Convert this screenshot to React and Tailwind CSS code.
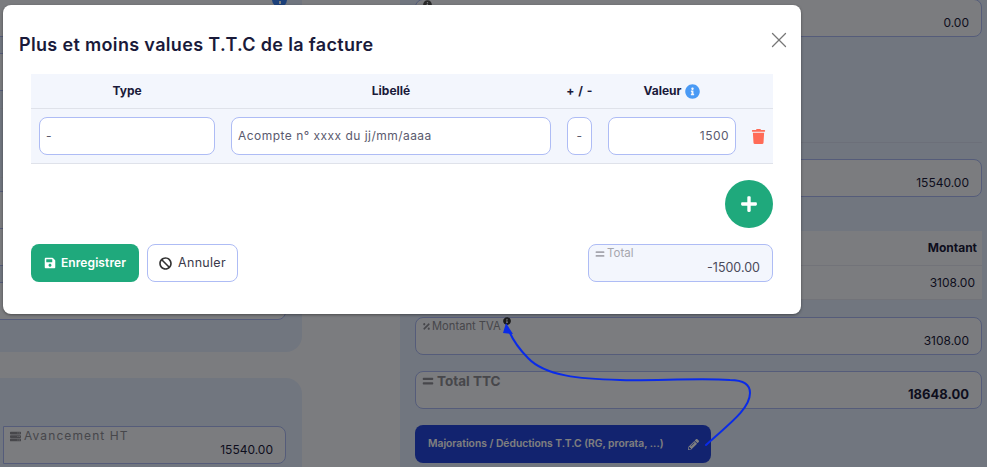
import React from "react";
import { FaTrash, FaSave, FaBan, FaInfoCircle, FaPlus, FaEquals, FaPercentage, FaServer, FaPencilAlt } from "react-icons/fa";
import { X } from "lucide-react";

function BgField({ className = "", label, icon, value, labelClass = "text-[11.5px]", valueClass = "-mt-[2px] text-[12px] text-[#1c1c3c]" }) {
  return (
    <div className={`h-[38px] shrink-0 rounded-lg border border-[#aab9f4] bg-[#f6f8ff] px-[6px] flex flex-col ${className}`}>
      <div className={`h-[17px] flex items-center gap-[3px] text-[#8e8e96] whitespace-nowrap ${labelClass}`}>
        {icon}
        {label}
      </div>
      <div className={`text-right pr-[6px] leading-[16px] ${valueClass}`}>{value}</div>
    </div>
  );
}

function Input({ className = "", children }) {
  return (
    <div className={`h-[38px] shrink-0 rounded-lg border border-[#aebcf5] bg-white flex items-center px-[6px] text-[12px] tracking-[0.47px] text-[#5a5a6e] ${className}`}>
      {children}
    </div>
  );
}

export default function App() {
  return (
    <div className="relative w-[987px] h-[467px] overflow-hidden bg-[#f6f8ff] font-['Inter',sans-serif] flex">
      {/* page behind the dialog */}
      <div className="w-[302px] shrink-0 flex flex-col">
        <div className="h-[352px] rounded-br-[16px] bg-[#e2ecfe] pr-[16px] flex flex-col relative">
          <BgField className="-ml-[10px] mt-[-1px]" />
          <BgField className="-ml-[10px] mt-[16px]" />
          <div className="-ml-[10px] mt-[17px] h-[70px] shrink-0 border-y border-[#e4e7f2]" />
          <BgField className="-ml-[10px] mt-[13px]" />
          <BgField className="-ml-[10px] mt-[-1px]" />
          <BgField className="-ml-[10px] mt-[16px]" />
          <div className="absolute left-[272px] -top-[8px] w-[15px] h-[15px] rounded-full bg-[#3b82f6]">
            <div className="absolute left-[6.5px] top-[9px] w-[2px] h-[3px] bg-white" />
          </div>
        </div>
        <div className="mt-[26px] flex-1 rounded-tr-[16px] bg-[#e2ecfe] pt-[48px] pl-[3px] pr-[16px]">
          <BgField
            label="Avancement HT"
            labelClass="text-[12px] tracking-[1.1px] pt-[1px]"
            icon={<FaServer className="text-[11px] text-[#8e8e96]" />}
            value="15540.00"
            className="rounded-l-none"
          />
        </div>
      </div>

      <div className="ml-[98px] flex-1 bg-[#e2ecfe] pl-[15px] pr-[5px] flex flex-col">
        <BgField
          className="mt-[-1px]"
          icon={<FaInfoCircle className="text-[9px] text-[#555] ml-[1px] -translate-y-[4px]" />}
          value="0.00"
        />
        <div className="mt-[105px] h-px shrink-0 bg-[#d9dff2]" />
        <BgField className="mt-[16px]" value="15540.00" />
        <div className="mt-[34px] h-[69px] shrink-0 bg-[#f6f8ff] flex flex-col text-right">
          <div className="h-[35px] pr-[5px] border-b border-[#e4e7f2] flex items-center justify-end text-[12px] font-bold text-[#1c1c3c]">Montant</div>
          <div className="h-[34px] pr-[7px] border-b border-[#e4e7f2] flex items-center justify-end text-[12px] text-[#1c1c3c]">3108.00</div>
        </div>
        <BgField
          className="mt-[17px]"
          label={
            <span className="-ml-[2px] flex items-center gap-[2px] text-[11.2px]">
              Montant TVA <FaInfoCircle className="text-[8px] text-[#333] -translate-y-[5px]" />
            </span>
          }
          icon={<FaPercentage className="text-[9px] text-[#8e8e96]" />}
          value="3108.00"
        />
        <BgField
          className="mt-[16px]"
          label={<span className="pt-[1px] text-[13.5px] font-bold text-[#8e8e96]">Total TTC</span>}
          icon={<FaEquals className="text-[12px] text-[#8e8e96]" />}
          value="18648.00"
          valueClass="-mt-[3px] text-[13px] font-bold text-[#1c1c3c]"
        />
        <div className="mt-[16px] w-[296px] h-[38px] shrink-0 rounded-lg bg-[#2446de] px-[13px] flex items-center justify-between text-[10.3px] font-semibold text-white whitespace-nowrap">
          Majorations / Déductions T.T.C (RG, prorata, ...)
          <FaPencilAlt className="text-[11px] text-white mr-[-1px]" />
        </div>
      </div>

      {/* backdrop */}
      <div className="absolute inset-0 bg-black/50" />

      {/* dialog */}
      <div className="absolute left-[3px] top-[5px] w-[798px] h-[309px] rounded-lg bg-white shadow-[0_1px_3px_rgba(0,0,0,0.4)] flex flex-col text-[#1a1a3a]">
        <div className="pl-[16px] pr-[9px] pt-[28px] h-[69px] shrink-0 flex items-start justify-between">
          <div className="text-[18px] leading-[24px] font-semibold tracking-[0.34px] text-[#1a1a3a]">Plus et moins values T.T.C de la facture</div>
          <X size={26} strokeWidth={1.2} className="text-[#777] mt-[-6px]" />
        </div>
        <div className="mx-[28px] bg-[#f3f6fd]">
          <div className="h-[35px] border-b border-[#dfe2ea] flex items-center text-[12px] font-bold text-[#1a1a3a]">
            <div className="w-[192px] text-center">Type</div>
            <div className="w-[336px] text-center">Libellé</div>
            <div className="w-[41px] text-center tracking-[0.5px]">+ / -</div>
            <div className="w-[144px] flex justify-center items-center gap-[4px]">
              Valeur
              <FaInfoCircle className="text-[15px] text-[#4a9af5]" />
            </div>
          </div>
          <div className="h-[55px] border-b border-[#dfe2ea] flex items-center pl-[8px]">
            <Input className="w-[176px]">-</Input>
            <Input className="w-[320px] ml-[16px]">Acompte n° xxxx du jj/mm/aaaa</Input>
            <Input className="w-[25px] ml-[16px] justify-center !px-0">-</Input>
            <Input className="w-[128px] ml-[16px] justify-end">1500</Input>
            <FaTrash className="ml-[15px] text-[15px] text-[#ff6b57]" />
          </div>
        </div>
        <div className="mx-[28px] mt-[16px] flex justify-end">
          <div className="w-[48px] h-[48px] rounded-full bg-[#1fa97c] flex items-center justify-center">
            <FaPlus className="text-[18px] text-white" />
          </div>
        </div>
        <div className="mx-[28px] mt-[16px] flex items-start">
          <div className="w-[108px] h-[38px] rounded-lg bg-[#1fa97c] flex items-center justify-center gap-[5px] text-[12px] tracking-[0.1px] font-semibold text-white">
            <FaSave className="text-[12px]" />
            Enregistrer
          </div>
          <div className="ml-[8px] w-[91px] h-[38px] rounded-lg border border-[#aebcf5] bg-white flex items-center justify-center gap-[6px] text-[12.5px] tracking-[0.3px] text-[#3a3a4a]">
            <FaBan className="text-[13px] text-[#333]" />
            Annuler
          </div>
          <div className="ml-auto w-[185px] h-[38px] rounded-lg border border-[#aebcf5] bg-[#f3f6fd] flex flex-col px-[6px]">
            <div className="h-[17px] flex items-center gap-[2px] text-[11.5px] text-[#a6a6ae]">
              <FaEquals className="text-[10px]" />
              Total
            </div>
            <div className="-mt-[2px] text-right pr-[6px] text-[12.5px] leading-[16px] text-[#4a4a5a]">-1500.00</div>
          </div>
        </div>
      </div>

      {/* annotation arrow */}
      <svg className="absolute inset-0 pointer-events-none" width="987" height="467" viewBox="0 0 987 467" fill="none">
        <path
          d="M706 445 C725 427 750 410 750 393 C750 384 742 380 730 380 C700 378 650 381 620 380 C580 379 545 376 528 358 C518 348 513 340 509 331"
          stroke="#0a2be8"
          strokeWidth="2"
          strokeLinecap="round"
        />
        <path d="M506 323 L513 334 L503 333 Z" fill="#0a2be8" />
      </svg>
    </div>
  );
}
